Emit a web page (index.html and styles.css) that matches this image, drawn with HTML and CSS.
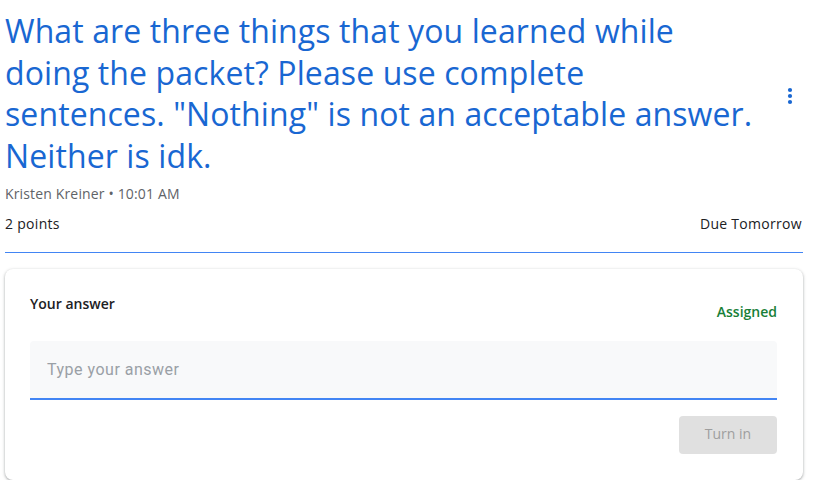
FILE: index.html
```html
<!DOCTYPE html>
<html lang="en">
<head>
<meta charset="utf-8">
<title>Question</title>
<link rel="stylesheet" href="styles.css">
</head>
<body>
<main class="page">
  <header class="head">
    <div class="title-row">
      <h1 class="title">What are three things that you learned while<br>doing the packet? Please use complete<br>sentences. "Nothing" is not an acceptable answer.<br>Neither is idk.</h1>
      <button class="more" aria-label="More options">
        <svg width="24" height="24" viewBox="0 0 24 24"><circle cx="12" cy="6" r="2.1" fill="#1967d2"/><circle cx="12" cy="12" r="2.1" fill="#1967d2"/><circle cx="12" cy="18" r="2.1" fill="#1967d2"/></svg>
      </button>
    </div>
    <div class="meta">Kristen Kreiner • 10:01 AM</div>
    <div class="points-row">
      <span class="points">2 points</span>
      <span class="due">Due Tomorrow</span>
    </div>
  </header>
  <section class="card">
    <div class="card-top">
      <span class="label">Your answer</span>
      <span class="status">Assigned</span>
    </div>
    <div class="field">Type your answer</div>
    <div class="actions">
      <button class="turn-in" disabled>Turn in</button>
    </div>
  </section>
</main>
</body>
</html>
```
FILE: styles.css
```css
html, body {
  margin: 0;
  padding: 0;
  background: #fff;
}
body {
  font-family: "Open Sans", Roboto, Arial, sans-serif;
  color: #3c4043;
}
.page {
  width: 798px;
  padding: 0 0 0 5px;
}
.head {
  border-bottom: 1px solid #4285f4;
  padding-top: 10px;
  padding-bottom: 19px;
}
.title-row {
  display: flex;
  align-items: center;
}
.title {
  width: 757px;
  flex: none;
  margin: 0;
  white-space: nowrap;
  font-family: "Open Sans", Roboto, sans-serif;
  font-weight: 400;
  font-size: 32px;
  line-height: 41.5px;
  color: #1967d2;
  letter-spacing: 0.1px;
}
.more {
  border: 0;
  background: none;
  padding: 0;
  width: 24px;
  height: 24px;
  margin-left: 16px;
  margin-top: 6px;
  display: flex;
}
.meta {
  font-size: 14px;
  letter-spacing: 0.15px;
  line-height: 18px;
  color: #5f6368;
  margin-top: 9px;
}
.points-row {
  display: flex;
  justify-content: space-between;
  margin-top: 12px;
  font-size: 14px;
  line-height: 18px;
  color: #3c4043;
}
.points {
  font-weight: 500;
  letter-spacing: 0.3px;
  color: #202124;
}
.due {
  font-weight: 500;
  letter-spacing: 0.3px;
  color: #202124;
  margin-right: 1px;
}
.card {
  margin-top: 16px;
  border-radius: 8px;
  box-shadow: 0 1px 2px rgba(60,64,67,.3), 0 1px 3px 1px rgba(60,64,67,.15);
  padding: 25px 26px 26px 25px;
  background: #fff;
}
.card-top {
  display: flex;
  justify-content: space-between;
  align-items: flex-start;
}
.label {
  font-size: 14px;
  font-weight: 600;
  line-height: 20px;
  color: #202124;
}
.status {
  font-size: 14px;
  font-weight: 600;
  color: #188038;
  margin-top: 8px;
  line-height: 20px;
}
.field {
  margin-top: 19px;
  height: 57px;
  background: #f8f9fa;
  border-bottom: 2px solid #4285f4;
  border-radius: 4px 4px 0 0;
  padding: 0 17px;
  display: flex;
  align-items: center;
  font-family: Roboto, sans-serif;
  font-size: 16px;
  letter-spacing: 0.5px;
  color: #9aa0a6;
}
.actions {
  display: flex;
  justify-content: flex-end;
  margin-top: 16px;
}
.turn-in {
  width: 98px;
  height: 38px;
  padding: 0 0 4px;
  border: 0;
  border-radius: 4px;
  background: #e0e0e0;
  color: #9e9e9e;
  font-family: "Open Sans", Roboto, sans-serif;
  font-size: 14px;
  font-weight: 500;
}
```
